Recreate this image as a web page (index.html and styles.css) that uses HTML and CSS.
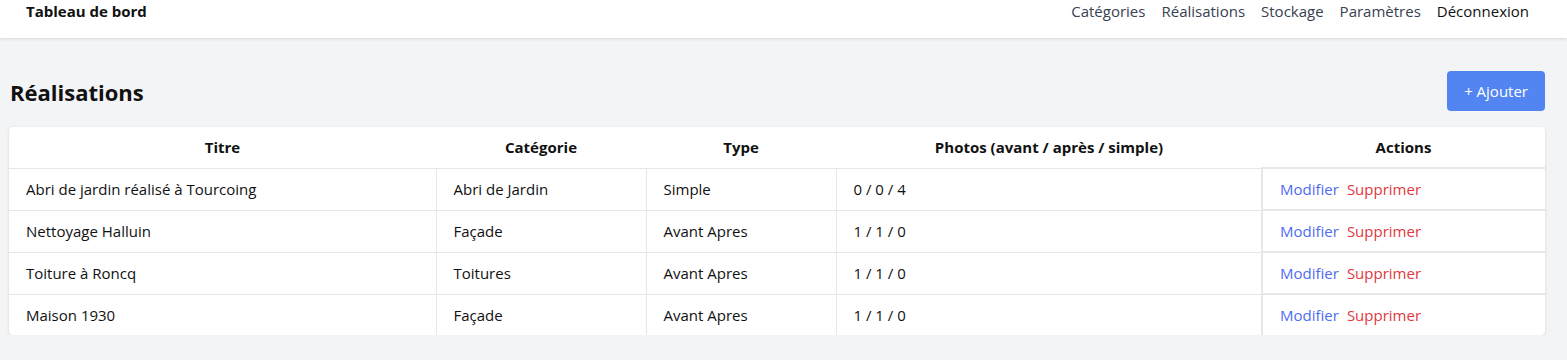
FILE: index.html
```html
<!DOCTYPE html>
<html lang="fr">
<head>
  <meta charset="UTF-8" />
  <meta name="viewport" content="width=device-width, initial-scale=1.0"/>
  <title>Réalisations</title>
  <link rel="stylesheet" href="styles.css">
</head>
<body>
  <nav class="navbar">
    <span class="brand">Tableau de bord</span>
    <div class="links">
      <a href="#">Catégories</a>
      <a href="#">Réalisations</a>
      <a href="#">Stockage</a>
      <a href="#">Paramètres</a>
      <a href="#" class="logout">Déconnexion</a>
    </div>
  </nav>

  <main class="content">
    <div class="page-head">
      <h1>Réalisations</h1>
      <button class="btn-add">+ Ajouter</button>
    </div>

    <div class="card">
      <table>
        <colgroup>
          <col class="c-title">
          <col class="c-cat">
          <col class="c-type">
          <col class="c-photos">
          <col class="c-actions">
        </colgroup>
        <thead>
          <tr>
            <th>Titre</th>
            <th>Catégorie</th>
            <th>Type</th>
            <th>Photos (avant / après / simple)</th>
            <th>Actions</th>
          </tr>
        </thead>
        <tbody>
          <tr>
            <td>Abri de jardin réalisé à Tourcoing</td>
            <td>Abri de Jardin</td>
            <td>Simple</td>
            <td>0 / 0 / 4</td>
            <td class="actions"><a href="#" class="edit">Modifier</a><a href="#" class="del">Supprimer</a></td>
          </tr>
          <tr>
            <td>Nettoyage Halluin</td>
            <td>Façade</td>
            <td>Avant Apres</td>
            <td>1 / 1 / 0</td>
            <td class="actions"><a href="#" class="edit">Modifier</a><a href="#" class="del">Supprimer</a></td>
          </tr>
          <tr>
            <td>Toiture à Roncq</td>
            <td>Toitures</td>
            <td>Avant Apres</td>
            <td>1 / 1 / 0</td>
            <td class="actions"><a href="#" class="edit">Modifier</a><a href="#" class="del">Supprimer</a></td>
          </tr>
          <tr>
            <td>Maison 1930</td>
            <td>Façade</td>
            <td>Avant Apres</td>
            <td>1 / 1 / 0</td>
            <td class="actions"><a href="#" class="edit">Modifier</a><a href="#" class="del">Supprimer</a></td>
          </tr>
        </tbody>
      </table>
    </div>
  </main>
</body>
</html>
```

FILE: styles.css
```css
body {
  margin: 0;
  font-family: 'Open Sans', 'Noto Sans', sans-serif;
  font-size: 15px;
  background: #f3f4f6;
  color: #111;
}
a { text-decoration: none; }

.navbar {
  height: 38px;
  background: #fff;
  box-shadow: 0 1px 3px rgba(0, 0, 0, 0.12);
  display: flex;
  justify-content: space-between;
  align-items: flex-start;
  padding: 1px 38px 0 26px;
  box-sizing: border-box;
}
.brand { font-weight: 700; line-height: 20px; }
.links { display: flex; gap: 16px; line-height: 20px; }
.links a { color: #374151; }
.links a.logout { color: #111; }

.content { padding: 33px 22px 0 9px; }
.page-head {
  display: flex;
  justify-content: space-between;
  align-items: center;
  margin-bottom: 16px;
}
.page-head h1 {
  margin: 2px 0 0 1px;
  font-size: 22px;
  font-weight: 700;
}
.btn-add {
  height: 40px;
  padding: 0 17px;
  background: #5284f2;
  color: #fff;
  border: none;
  border-radius: 4px;
  font-family: inherit;
  font-size: 15px;
  cursor: pointer;
}

.card {
  background: #fff;
  border-radius: 4px;
  box-shadow: 0 1px 3px rgba(0, 0, 0, 0.14);
  overflow: hidden;
}
table {
  width: 100%;
  border-collapse: collapse;
  table-layout: fixed;
}
.c-title { width: 427px; }
.c-cat { width: 210px; }
.c-type { width: 190px; }
.c-photos { width: 426px; }
th {
  height: 40px;
  font-weight: 700;
  text-align: center;
  padding: 0;
}
td {
  height: 40px;
  padding: 0 17px;
  border: 1px solid #e5e7eb;
}
tbody tr:last-child td { border-bottom: none; }
td:first-child { border-left: none; }
td:last-child { border-right: none; }
td.actions {
  border-left: 2px solid #e5e7eb;
  border-top: 2px solid #e5e7eb;
  padding-left: 17px;
}
.actions a { margin-right: 8px; }
.edit { color: #4f6cf0; }
.del { color: #e0383e; }
```
